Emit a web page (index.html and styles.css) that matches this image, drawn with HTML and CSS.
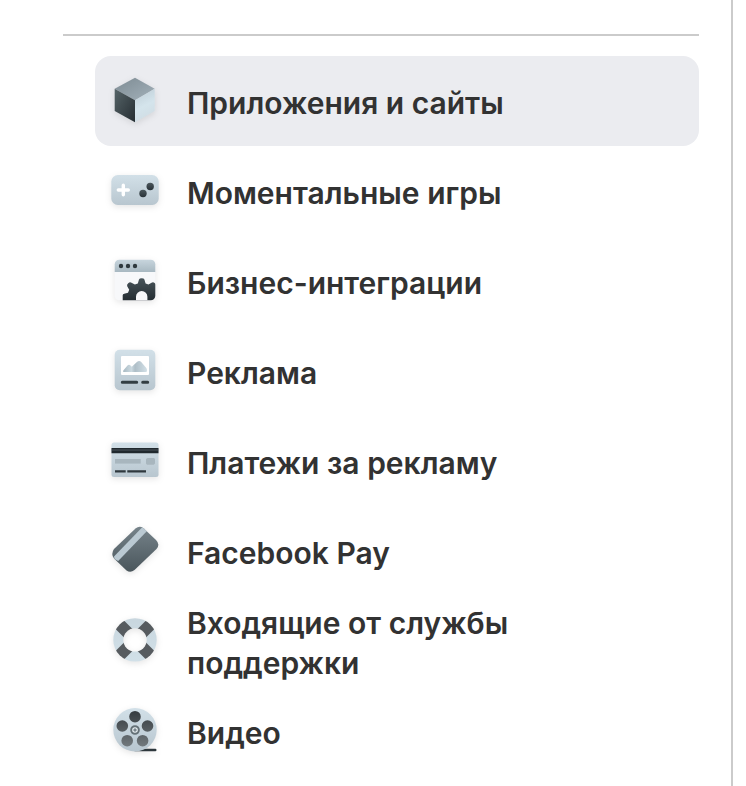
FILE: index.html
```html
<!DOCTYPE html>
<html lang="ru">
<head>
<meta charset="utf-8">
<meta name="viewport" content="width=device-width, initial-scale=1">
<title>Настройки</title>
<link rel="stylesheet" href="styles.css">
</head>
<body>
<nav class="sidebar" aria-label="Настройки">
  <hr class="divider">
  <ul class="menu">
    <li><a class="item item-active" href="#apps" aria-current="page">
      <svg class="icon" viewBox="11 12 48 48" aria-hidden="true">
        <defs>
          <linearGradient id="cubeTop" x1="0" y1="0" x2="1" y2="1"><stop offset="0" stop-color="#7d8b93"/><stop offset="1" stop-color="#a3b1ba"/></linearGradient>
          <linearGradient id="cubeLeft" x1="0" y1="0" x2="1" y2="1"><stop offset="0" stop-color="#566468"/><stop offset="1" stop-color="#252d32"/></linearGradient>
          <linearGradient id="cubeRight" x1="0" y1="0" x2=".3" y2="1"><stop offset="0" stop-color="#bccbd4"/><stop offset=".6" stop-color="#d4e4ec"/><stop offset="1" stop-color="#d0dde4"/></linearGradient>
        </defs>
        <path fill="url(#cubeTop)" d="M35 12.7 54.7 23.7 35 35.2 14.7 23.7Z"/>
        <path fill="url(#cubeLeft)" d="M14.7 23.7 35 35.2V57.3L14.7 46Z"/>
        <path fill="url(#cubeRight)" d="M54.7 23.7 35 35.2V57.3L54.7 46Z"/>
      </svg>
      <span class="label">Приложения и сайты</span></a></li>
    <li><a class="item" href="#games">
      <svg class="icon" viewBox="11 12 48 48" aria-hidden="true">
        <defs>
          <linearGradient id="pale" x1="0" y1="0" x2="0" y2="1"><stop offset="0" stop-color="#d2e0e8"/><stop offset="1" stop-color="#b8c6cf"/></linearGradient>
          <linearGradient id="dark" x1="0" y1="0" x2="0" y2="1"><stop offset="0" stop-color="#4b575c"/><stop offset="1" stop-color="#293238"/></linearGradient>
        </defs>
        <rect x="11.3" y="20" width="47.4" height="30" rx="6.5" fill="url(#pale)"/>
        <path d="M23.3 30.2v9.600M18.3 35h10" stroke="#fff" stroke-width="3.4" stroke-linecap="round"/>
        <circle cx="43" cy="38.5" r="3.7" fill="url(#dark)"/>
        <circle cx="50.2" cy="31.5" r="3.7" fill="url(#dark)"/>
      </svg>
      <span class="label">Моментальные игры</span></a></li>
    <li><a class="item" href="#business">
      <svg class="icon" viewBox="11 12 48 48" aria-hidden="true">
        <defs>
          <linearGradient id="bar" x1="0" y1="0" x2="0" y2="1"><stop offset="0" stop-color="#c9d7df"/><stop offset="1" stop-color="#a8b8c1"/></linearGradient>
          <linearGradient id="gearFill" gradientUnits="userSpaceOnUse" x1="0" y1="33" x2="0" y2="55"><stop offset="0" stop-color="#48545a"/><stop offset="1" stop-color="#252e33"/></linearGradient>
          <clipPath id="windowClip"><rect x="14.7" y="14.7" width="40.6" height="40.6" rx="4.5"/></clipPath>
        </defs>
        <g clip-path="url(#windowClip)">
          <path fill="#f7f8fa" d="M14 14h42v42H14z"/>
          <path fill="url(#bar)" d="M14 14h42v13H14z"/>
          <g fill="#2f393e"><circle cx="21" cy="21" r="2.2"/><circle cx="28" cy="21" r="2.2"/><circle cx="35" cy="21" r="2.2"/></g>
          <path fill="url(#gearFill)" d="M37.8 38.4 39 34.6Q39.4 33.2 41.7 33.2T44.4 34.600L45.6 38.4 48.5 39.6 51.5 37.700Q53.2 36.700 54.9 38.200L56 39.500V56H22.7V50.2Q22.7 49 24.2 48.7L28 47.800 29.200 44.800 27.200 41.300Q26.5 39.700 28.2 38.200T31.500 37.700L34.900 39.600Z"/>
          <path fill="#f7f8fa" d="M36 56V51.7a5.700 5.700 0 0 1 11.400 0V56Z"/>
        </g>
      </svg>
      <span class="label">Бизнес-интеграции</span></a></li>
    <li><a class="item" href="#ads">
      <svg class="icon" viewBox="11 12 48 48" aria-hidden="true">
        <defs>
          <linearGradient id="hills" x1="0" y1="0" x2="1" y2="0"><stop offset="0" stop-color="#a7b9c2"/><stop offset=".35" stop-color="#ccdae1"/><stop offset=".5" stop-color="#aebec7"/><stop offset="1" stop-color="#d2e0e7"/></linearGradient>
        </defs>
        <rect x="14.7" y="14.7" width="40.6" height="40.6" rx="5" fill="url(#pale)"/>
        <rect x="21" y="21" width="28" height="19" rx="1" fill="#fff"/>
        <path fill="url(#hills)" d="M23.5 37q-1-.5 0-1.7l4-4.7q1.5-1.5 3 0l1.3 1.1 5.4-5q2-1.5 3.8 0l5.5 6.5q1.2 2 0 3.8Z"/>
        <path d="M22.3 47.3h14.4M42.7 47.3h5" stroke="#333e43" stroke-width="3" stroke-linecap="round"/>
      </svg>
      <span class="label">Реклама</span></a></li>
    <li><a class="item" href="#ad-payments">
      <svg class="icon" viewBox="11 12 48 48" aria-hidden="true">
        <rect x="11.5" y="17.5" width="47" height="34.5" rx="2.5" fill="url(#pale)"/>
        <path fill="#20292e" d="M11.5 23h47v5.3h-47z"/>
        <path d="M11.5 25h47" stroke="#6b777d" stroke-width=".6"/>
        <rect x="15" y="34" width="25.7" height="4.6" fill="#a8b6be"/>
        <path fill="#a8b6be" d="m46 34 1.5-1H54l1 1v4.5l-1.3 1.2H47L46 38.5Z"/>
        <path d="M15 46.3h10.7M27.3 46.3h18.7" stroke="#2f393e" stroke-width="2.2"/>
      </svg>
      <span class="label">Платежи за рекламу</span></a></li>
    <li><a class="item" href="#pay">
      <svg class="icon" viewBox="11 12 48 48" aria-hidden="true">
        <defs>
          <linearGradient id="payFill" x1="0" y1="0" x2="0" y2="1"><stop offset="0" stop-color="#76838a"/><stop offset="1" stop-color="#4a565c"/></linearGradient>
        </defs>
        <path fill="url(#payFill)" d="M14 34 35.5 13.5Q39.5 10.2 43.5 13.2L56 25Q60.5 29.5 56.5 34L34.5 55Q30.5 58.3 26.5 55.5L14 43.5Q10.5 39 14 34Z"/>
        <path fill="#bac9d2" d="M14 41.4 42 12.4Q42.9 12.7 43.5 13.2L46.8 16.3 18.2 46 14.5 44Z"/>
      </svg>
      <span class="label">Facebook Pay</span></a></li>
    <li><a class="item" href="#support">
      <svg class="icon" viewBox="11 12 48 48" aria-hidden="true">
        <defs>
          <linearGradient id="ring" x1="0" y1="0" x2="0" y2="1"><stop offset="0" stop-color="#c8d6de"/><stop offset="1" stop-color="#d2e1e9"/></linearGradient>
          <mask id="ringMask"><circle cx="35" cy="34.9" r="21.7" fill="#fff"/><circle cx="35" cy="34.9" r="11.7" fill="#000"/></mask>
        </defs>
        <g mask="url(#ringMask)">
          <path fill="url(#ring)" d="M11 12h48v48H11z"/>
          <path d="M15 14.9l40 40M55 14.9l-40 40" stroke="#565b5f" stroke-width="12"/>
        </g>
      </svg>
      <span class="label">Входящие от службы поддержки</span></a></li>
    <li><a class="item" href="#video">
      <svg class="icon" viewBox="11 12 48 48" aria-hidden="true">
        <defs>
          <linearGradient id="reelHole" gradientUnits="userSpaceOnUse" x1="0" y1="16" x2="0" y2="51"><stop offset="0" stop-color="#353b3f"/><stop offset="1" stop-color="#71787c"/></linearGradient>
        </defs>
        <path d="M35 55h20.3" stroke="#2d373c" stroke-width="2.4" stroke-linecap="round"/>
        <circle cx="35" cy="34.8" r="21.7" fill="url(#pale)"/>
        <g fill="url(#reelHole)">
          <circle cx="35" cy="21.7" r="5.8"/><circle cx="22.3" cy="31" r="5.8"/><circle cx="47.5" cy="31" r="5.8"/><circle cx="27.2" cy="45.7" r="5.8"/><circle cx="42.6" cy="45.7" r="5.8"/>
        </g>
        <circle cx="35" cy="35" r="3.8" fill="#edf3f6" stroke="#657177" stroke-width="2"/>
        <circle cx="35" cy="35" r="1.7" fill="#79858c"/>
      </svg>
      <span class="label">Видео</span></a></li>
  </ul>
</nav>
</body>
</html>
```
FILE: styles.css
```css
* { box-sizing: border-box; }

body {
  margin: 0;
  background: #fff;
  color: #323232;
  font-family: Inter, "Liberation Sans", sans-serif;
}

.sidebar {
  min-height: 100vh;
  margin-right: 13px;
  padding: 34px 32px 10px 63px;
  border-right: 2px solid #cbcbcb;
}

.divider {
  height: 2px;
  margin: 0 0 20px;
  border: 0;
  background: #cbcbcb;
}

.menu {
  margin: 0 0 0 32px;
  padding: 0;
  list-style: none;
}

.item {
  display: flex;
  align-items: center;
  gap: 28px;
  min-height: 90px;
  padding: 0 16px;
  border-radius: 16px;
  color: inherit;
  text-decoration: none;
}

.item-active { background: #ebecf0; }

.icon {
  flex: none;
  width: 48px;
  height: 48px;
  fill: none;
  overflow: visible;
  filter: drop-shadow(0 2px 3px rgb(0 0 0 / 10%));
}

.label {
  max-width: 360px;
  padding-top: 4px;
  font-size: 30px;
  font-weight: 600;
  line-height: 40px;
}
```
